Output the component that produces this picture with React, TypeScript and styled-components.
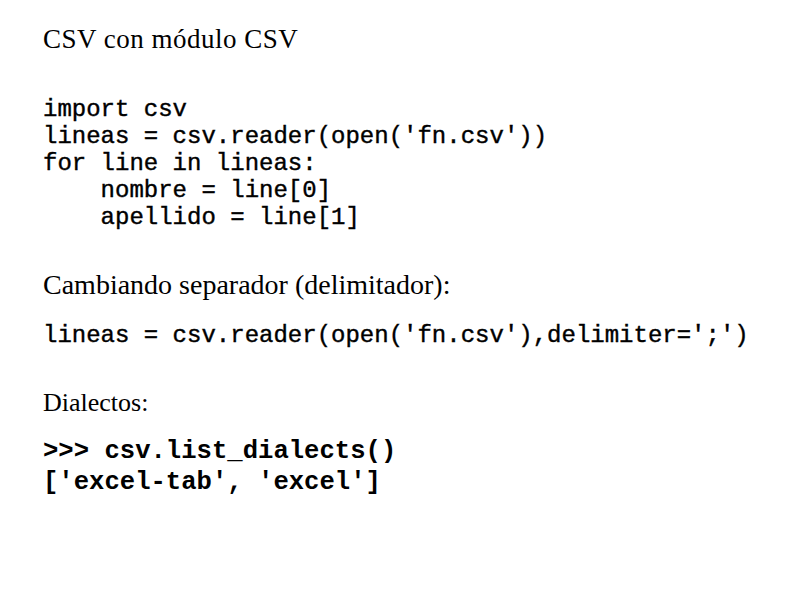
import React from "react";
import styled, { createGlobalStyle } from "styled-components";

const Global = createGlobalStyle`
  html, body { margin: 0; padding: 0; background: #fff; }
  body { width: 794px; height: 595px; overflow: hidden; }
`;

const Slide = styled.div`
  width: 794px;
  height: 595px;
  box-sizing: border-box;
  padding: 24px 0 0 43px;
  background: #fff;
  color: #000;
  display: flex;
  flex-direction: column;
`;

const Heading = styled.div<{ $size?: number; $top?: number; $spacing?: number }>`
  font-family: "Liberation Serif", "Times New Roman", serif;
  font-size: ${(p) => p.$size ?? 28}px;
  letter-spacing: ${(p) => p.$spacing ?? 0}px;
  line-height: 1.15;
  margin-top: ${(p) => p.$top ?? 0}px;
  white-space: pre;
`;

const Code = styled.pre<{ $size?: number; $line?: number; $top?: number; $bold?: boolean }>`
  margin: ${(p) => p.$top ?? 0}px 0 0 0;
  font-family: "Liberation Mono", "Courier New", monospace;
  font-size: ${(p) => p.$size ?? 24}px;
  line-height: ${(p) => p.$line ?? 27}px;
  font-weight: ${(p) => (p.$bold ? 700 : 400)};
  -webkit-text-stroke: ${(p) => (p.$bold ? "0" : "0.4px #000")};
`;

export default function App() {
  return (
    <>
      <Global />
      <Slide>
        <Heading $size={27} $spacing={0.5}>CSV con módulo CSV</Heading>
        <Code $top={41}>{`import csv
lineas = csv.reader(open('fn.csv'))
for line in lineas:
    nombre = line[0]
    apellido = line[1]`}</Code>
        <Heading $size={28} $top={38}>Cambiando separador (delimitador):</Heading>
        <Code $top={21}>{`lineas = csv.reader(open('fn.csv'),delimiter=';')`}</Code>
        <Heading $size={26} $top={39}>Dialectos:</Heading>
        <Code $top={18} $size={25.6} $line={31} $bold>{`>>> csv.list_dialects()
['excel-tab', 'excel']`}</Code>
      </Slide>
    </>
  );
}
